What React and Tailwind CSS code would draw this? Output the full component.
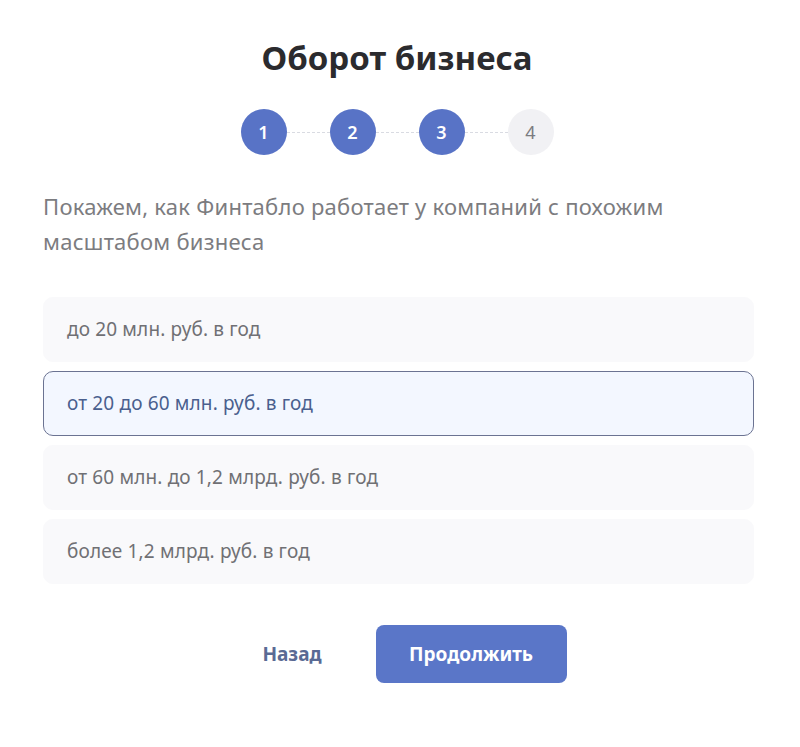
import React, { useState } from "react"

const options = [
    "до 20 млн. руб. в год",
    "от 20 до 60 млн. руб. в год",
    "от 60 млн. до 1,2 млрд. руб. в год",
    "более 1,2 млрд. руб. в год",
]

const steps = [1, 2, 3, 4]
const currentStep = 3

function Stepper() {
    return (
        <div className="flex items-center justify-center pr-[6px]">
            {steps.map((step, index) => (
                <React.Fragment key={step}>
                    {index > 0 && (
                        <div className="w-[43px] border-t border-dashed border-[#d9dbe2]" />
                    )}
                    <div
                        className={`flex items-center justify-center w-[46px] h-[46px] rounded-full text-[18px] ${
                            step <= currentStep
                                ? "bg-[#5873c6] text-white font-semibold"
                                : "bg-[#f1f1f4] text-[#7b7b80]"
                        }`}>
                        {step}
                    </div>
                </React.Fragment>
            ))}
        </div>
    )
}

export default function App() {
    const [selected, setSelected] = useState(1)

    return (
        <div
            className="min-h-screen bg-white flex flex-col px-[43px] pt-[36px]"
            style={{ fontFamily: '"Noto Sans", "Open Sans", sans-serif' }}>
            {/* Header */}
            <h1 className="text-center text-[33px] leading-[44px] font-bold text-[#2b2b2e] pr-[6px]">
                Оборот бизнеса
            </h1>

            <div className="mt-[29px]">
                <Stepper />
            </div>

            {/* Description */}
            <p className="mt-[34px] text-[22px] leading-[35px] tracking-[0.25px] text-[#7c7c80]">
                Покажем, как Финтабло работает у компаний с похожим
                масштабом бизнеса
            </p>

            {/* Options */}
            <div className="mt-[38px] flex flex-col gap-[9px] w-[711px]">
                {options.map((option, index) => (
                    <button
                        key={option}
                        onClick={() => setSelected(index)}
                        className={`h-[65px] text-left px-[23px] rounded-[10px] text-[19px] tracking-[0.15px] ${
                            selected === index
                                ? "bg-[#f3f7ff] border border-[#6b7392] text-[#4a5f8e]"
                                : "bg-[#f9f9fb] border border-[#f9f9fb] text-[#707074]"
                        }`}>
                        {option}
                    </button>
                ))}
            </div>

            {/* Actions */}
            <div className="mt-[41px] flex items-center justify-center gap-[54px] pl-[29px]">
                <button className="text-[19px] font-bold text-[#5a6a94]">
                    Назад
                </button>
                <button className="w-[191px] h-[58px] rounded-[8px] bg-[#5a76c8] text-white text-[19px] font-bold">
                    Продолжить
                </button>
            </div>
        </div>
    )
}
